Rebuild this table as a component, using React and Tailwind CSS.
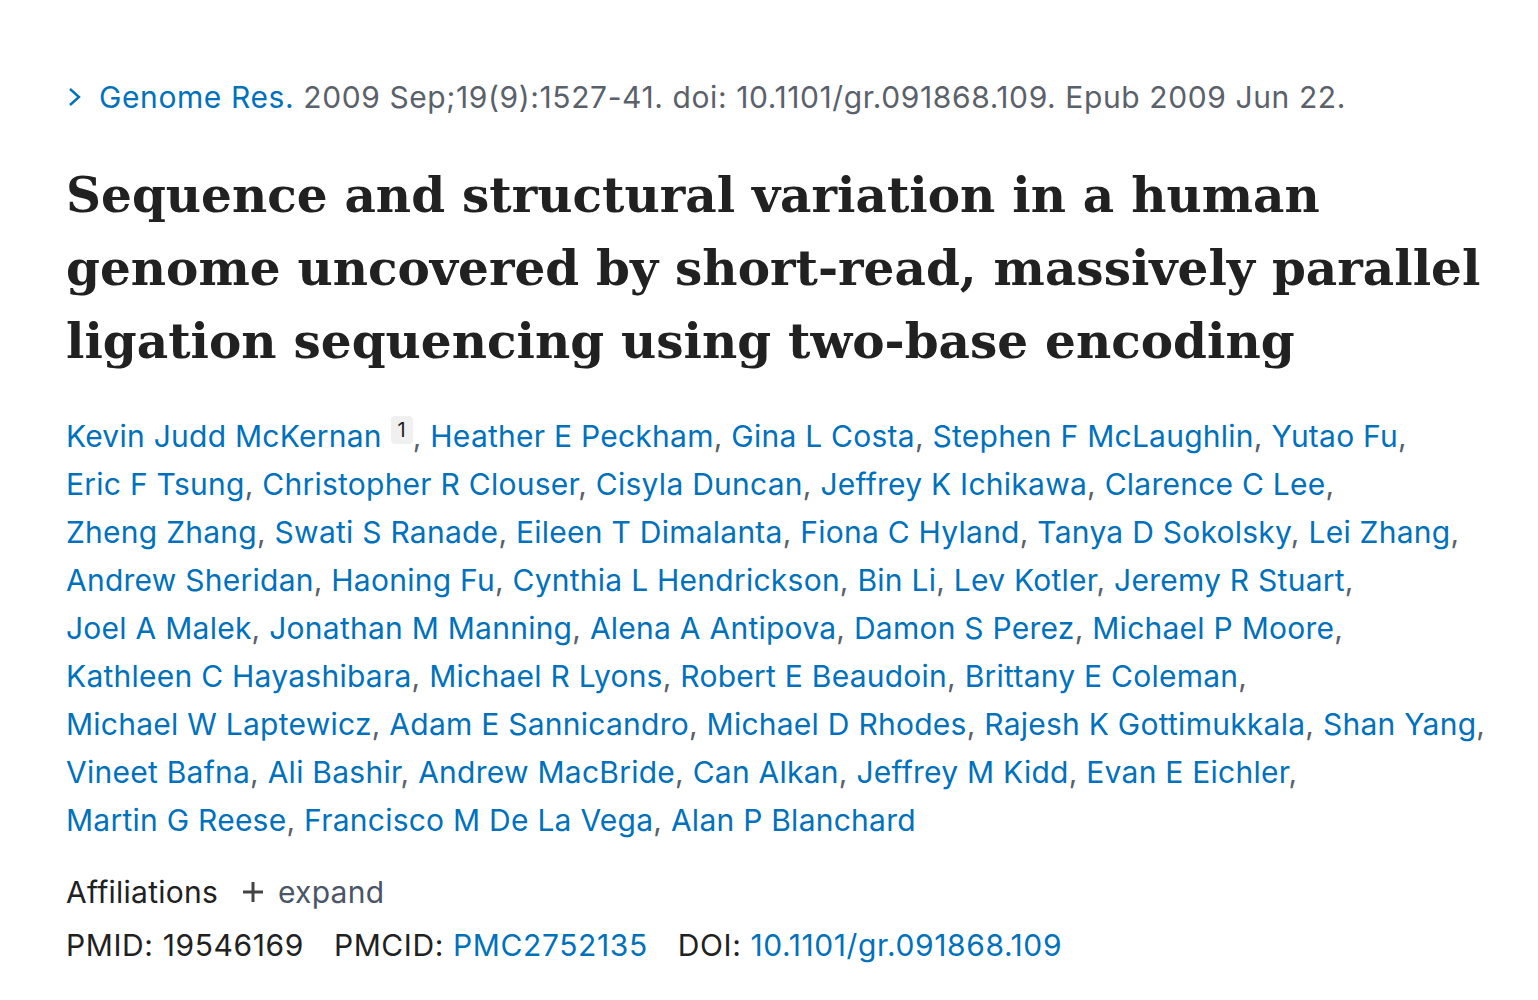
const authorLines = [
  ["Kevin Judd McKernan|1", "Heather E Peckham", "Gina L Costa", "Stephen F McLaughlin", "Yutao Fu"],
  ["Eric F Tsung", "Christopher R Clouser", "Cisyla Duncan", "Jeffrey K Ichikawa", "Clarence C Lee"],
  ["Zheng Zhang", "Swati S Ranade", "Eileen T Dimalanta", "Fiona C Hyland", "Tanya D Sokolsky", "Lei Zhang"],
  ["Andrew Sheridan", "Haoning Fu", "Cynthia L Hendrickson", "Bin Li", "Lev Kotler", "Jeremy R Stuart"],
  ["Joel A Malek", "Jonathan M Manning", "Alena A Antipova", "Damon S Perez", "Michael P Moore"],
  ["Kathleen C Hayashibara", "Michael R Lyons", "Robert E Beaudoin", "Brittany E Coleman"],
  ["Michael W Laptewicz", "Adam E Sannicandro", "Michael D Rhodes", "Rajesh K Gottimukkala", "Shan Yang"],
  ["Vineet Bafna", "Ali Bashir", "Andrew MacBride", "Can Alkan", "Jeffrey M Kidd", "Evan E Eichler"],
  ["Martin G Reese", "Francisco M De La Vega", "Alan P Blanchard"],
];

function Author({ name, last }) {
  const [n, sup] = name.split("|");
  return (
    <span>
      <a className="text-[#0071bc]">{n}</a>
      {sup && (
        <span className="relative top-[-9px] ml-[9px] inline-block h-[28px] w-[22px] rounded-[4px] bg-[#f0f0f0] text-center align-middle text-[20px] leading-[28px] text-[#212121]">
          {sup}
        </span>
      )}
      {!last && <span className="text-[#5b616b]">, </span>}
    </span>
  );
}

export default function App() {
  return (
    <div className="min-h-screen bg-white pl-[66px] pt-[75px] font-['Inter','Noto_Sans',sans-serif]">
      <div className="flex items-center text-[30px] leading-[44px] tracking-[0.6px] text-[#5b616b]">
        <svg width="18" height="22" viewBox="0 0 18 22" className="mr-[15px]">
          <path d="M4 3 L13 11 L4 19" fill="none" stroke="#0071bc" strokeWidth="2.4" />
        </svg>
        <a className="text-[#0071bc]">Genome Res.</a>
        <span className="ml-[9px]">2009 Sep;19(9):1527-41. doi: 10.1101/gr.091868.109. Epub 2009 Jun 22.</span>
      </div>

      <h1 className="mt-[39px] font-['DejaVu_Serif',serif] text-[48.5px] font-bold leading-[73px] text-[#212121]">
        <div>Sequence and structural variation in a human</div>
        <div>genome uncovered by short-read, massively parallel</div>
        <div>ligation sequencing using two-base encoding</div>
      </h1>

      <div className="mt-[35px] text-[30px] leading-[48px] tracking-[0.25px]">
        {authorLines.map((line, i) => (
          <div key={i} className="whitespace-nowrap">
            {line.map((a, j) => (
              <Author key={a} name={a} last={i === authorLines.length - 1 && j === line.length - 1} />
            ))}
          </div>
        ))}
      </div>

      <div className="mt-[24px] flex items-center text-[30px] leading-[48px] tracking-[0.25px] text-[#212121]">
        <span>Affiliations</span>
        <span className="ml-[24px] flex items-center text-[#4a5568]">
          <svg width="22" height="22" viewBox="0 0 22 22" className="mr-[14px]">
            <path d="M11 1 V21 M1 11 H21" stroke="#444" strokeWidth="3" />
          </svg>
          expand
        </span>
      </div>
      <div className="mt-[5px] flex text-[30px] leading-[48px] tracking-[0.6px] text-[#212121]">
        <span>PMID: 19546169</span>
        <span className="ml-[30px]">PMCID: <a className="text-[#0071bc]">PMC2752135</a></span>
        <span className="ml-[30px]">DOI: <a className="text-[#0071bc]">10.1101/gr.091868.109</a></span>
      </div>
    </div>
  );
}
